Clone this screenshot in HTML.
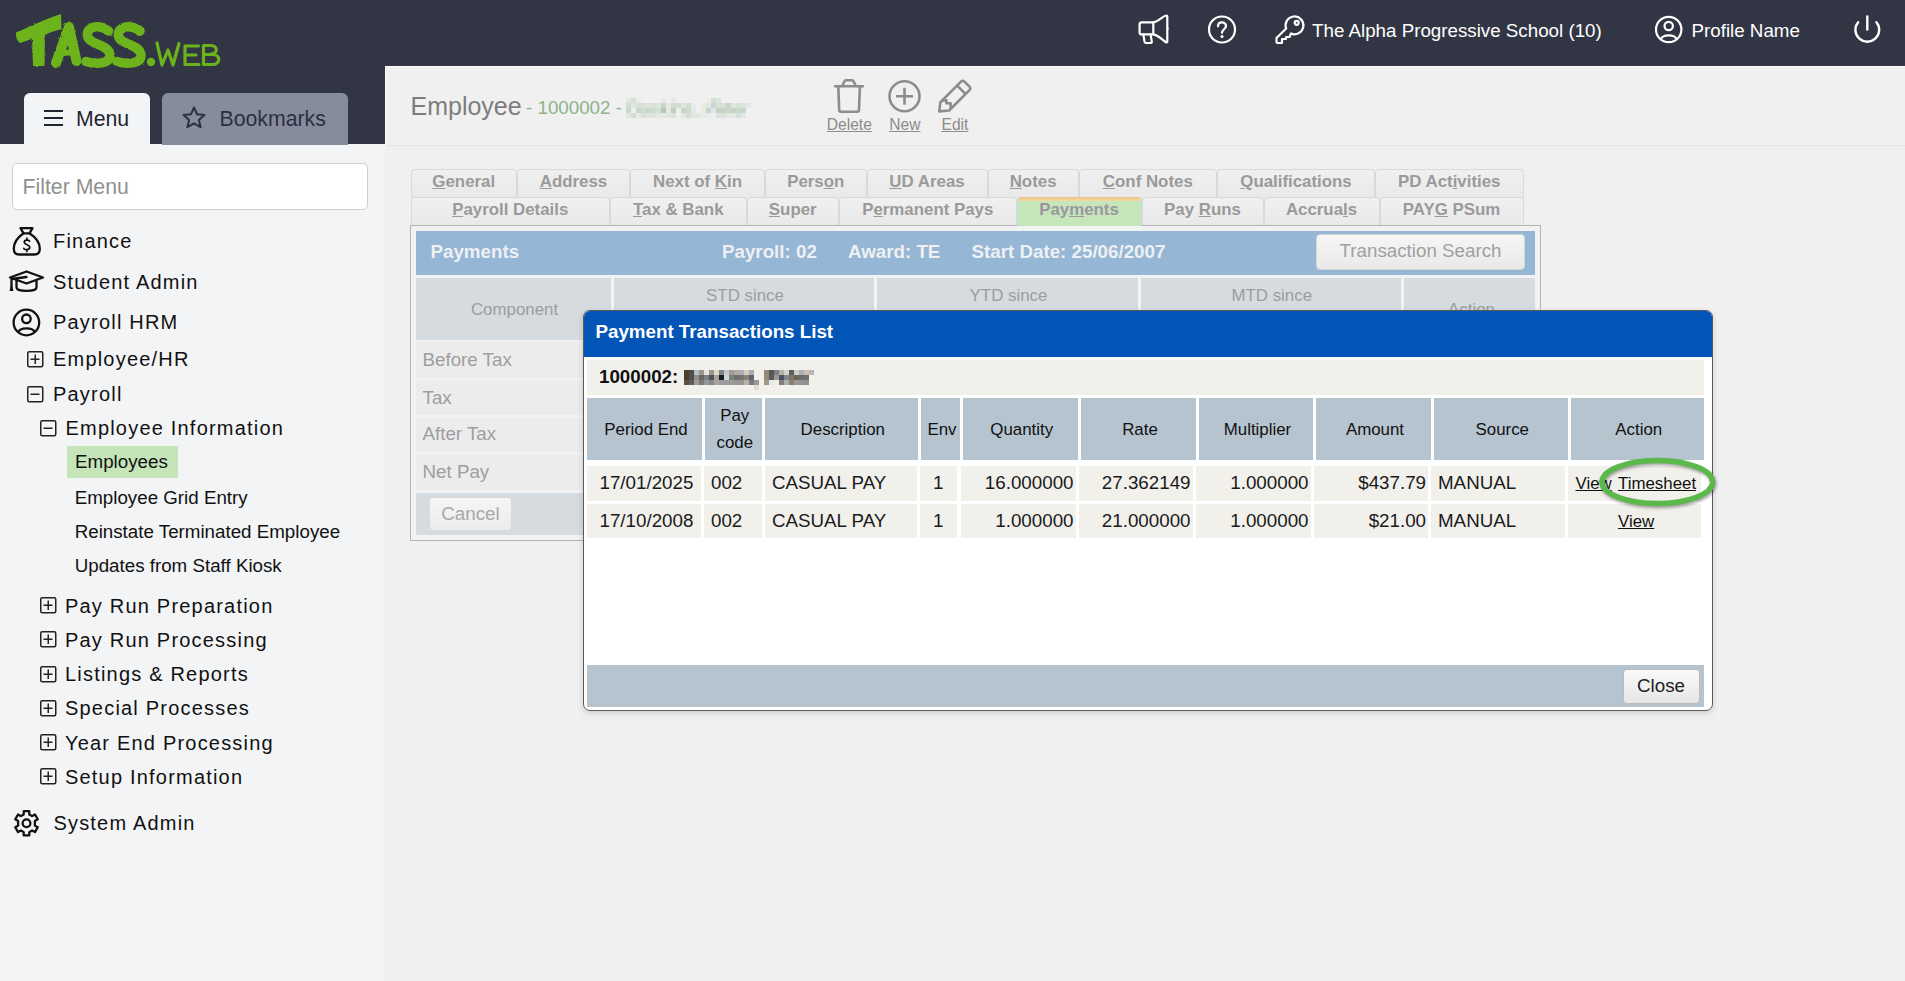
<!DOCTYPE html>
<html><head><meta charset="utf-8">
<style>
*{box-sizing:border-box;margin:0;padding:0}
html,body{width:1905px;height:981px;overflow:hidden;background:#f0f0f0;font-family:"Liberation Sans",sans-serif}
.abs{position:absolute}
svg.abs{overflow:visible}
.t{position:absolute;white-space:nowrap;line-height:1}
</style></head><body>
<div class="abs" style="left:0px;top:0px;width:1905px;height:66px;background:#323644;"></div>
<div class="abs" style="left:0px;top:0px;width:385px;height:981px;background:#f3f4f6;"></div>
<div class="abs" style="left:0px;top:0px;width:385px;height:144px;background:#323644;"></div>
<div class="abs" style="left:385px;top:66px;width:1520px;height:915px;background:#f0f0f0;"></div>
<div class="abs" style="left:385px;top:66px;width:1px;height:79px;background:#fbfbfb;"></div>
<div class="abs" style="left:385px;top:145px;width:1px;height:836px;background:#ededed;"></div>
<div class="abs" style="left:385px;top:66px;width:1520px;height:1px;background:#fcfcfc;"></div>
<div class="abs" style="left:386px;top:145px;width:1519px;height:1px;background:#e6e6e6;"></div>
<svg class="abs" style="left:0px;top:0px;" width="240" height="80" viewBox="0 0 240 80">
<defs><filter id="rough" x="-5%" y="-5%" width="110%" height="110%"><feTurbulence type="fractalNoise" baseFrequency="0.35" numOctaves="2" seed="3"/><feDisplacementMap in="SourceGraphic" scale="2.2"/></filter></defs>
<g filter="url(#rough)">
<path d="M16 32.5 C 30 27, 45 19, 61 14 L 61.5 29 C 48 33, 32 39, 20 43 C 17 41, 15.5 36, 16 32.5 Z" fill="#6cb31b"/>
<path d="M32 37 L 45 32 L 44.5 66 L 33 66 Z" fill="#6cb31b"/>
<g fill="none" stroke="#6cb31b" stroke-linecap="round" stroke-linejoin="round">
<path d="M56 63 L69 27 L76.5 61" stroke-width="10"/>
<path d="M63 53 L75 52" stroke-width="6"/>
<path d="M108.5 31 C 99 24, 86 26, 87.5 36 C 89 45, 110 44, 110 55.5 C 110 64, 96 64.5, 86 61.5" stroke-width="9.5"/>
<path d="M140 31 C 130 24, 117 26, 118.5 36 C 120 45, 141 44, 141 55.5 C 141 64, 127 64.5, 117 61.5" stroke-width="9.5"/>
</g></g>
<g fill="none" stroke="#6cb31b" stroke-linecap="round" stroke-linejoin="round">
<path d="M157 43 L162 65 L168 50 L173 65 L179 43.5" stroke-width="3.2"/>
<path d="M198.5 46 L185 46 L185 64.5 L199 64.5 M185 55 L196 55" stroke-width="3.2"/>
<path d="M203.5 45.5 L203.5 64.5 L212 64.5 C 221 64.5, 221 54.5, 212 54.5 L204 54.5 M203.5 45.5 L211 45.5 C 218 45.5, 218 54, 211 54" stroke-width="3.2"/>
</g>
<circle cx="151" cy="62" r="4.2" fill="#6cb31b"/>
</svg>
<svg class="abs" style="left:1137px;top:13px;" width="36" height="33" viewBox="0 0 36 33"><g fill="none" stroke="#fff" stroke-width="2.2" stroke-linejoin="round" stroke-linecap="round">
<path d="M4.6 9.4 H16.3 V21.4 H4.6 C 3.4 21.4, 2.6 20.6, 2.6 19.4 V11.4 C 2.6 10.2, 3.4 9.4, 4.6 9.4 Z"/>
<path d="M16.3 9.4 C 21.5 8.5, 25.5 3, 29.3 2.5 C 29.8 2.5, 30.3 3, 30.3 3.5 V28.5 C 30.3 29.3, 29.7 29.6, 29 29.2 C 25.5 27, 21 22, 16.3 21.4"/>
<path d="M6.3 21.4 L7.6 29 C 7.8 29.8, 8.3 30, 9 30 H13.8 C 14.6 30, 14.9 29.5, 14.8 28.8 L13.6 21.4"/></g>
<path d="M30.3 13.5 A 2.2 2.2 0 0 1 30.3 17.5 Z" fill="#fff"/></svg>
<svg class="abs" style="left:1206px;top:14px;" width="32" height="32" viewBox="0 0 32 32"><g fill="none" stroke="#fff" stroke-width="2.2" stroke-linecap="round"><circle cx="16" cy="15.5" r="13"/>
<path d="M12 12.3 C 12 7.2, 20 7.2, 20 12 C 20 15, 16 15.5, 16 18.8"/></g><circle cx="16" cy="22.6" r="1.5" fill="#fff"/></svg>
<svg class="abs" style="left:1273px;top:13px;" width="34" height="34" viewBox="0 0 34 34"><g fill="none" stroke="#fff" stroke-width="2.2" stroke-linejoin="round" stroke-linecap="round">
<path d="M13.2 15.5 A 8.9 8.9 0 1 1 18 20.5 L 16.5 24 L 13 24 L 13 26 L 9 26 L 9 30 L 4.5 30 C 3.8 30, 3.5 29.7, 3.5 29 L 3.5 25 Z"/>
<circle cx="23.7" cy="9.8" r="2"/></g></svg>
<div class="t" style="left:1312px;top:21.93px;font-size:18.75px;color:#fff;">The Alpha Progressive School (10)</div>
<svg class="abs" style="left:1653px;top:14px;" width="32" height="32" viewBox="0 0 32 32"><g fill="none" stroke="#fff" stroke-width="2.2"><circle cx="15.7" cy="15.5" r="12.7"/><circle cx="15.7" cy="12" r="4.2"/>
<path d="M7.7 25.3 C 9.7 20, 21.7 20, 23.7 25.3"/></g></svg>
<div class="t" style="left:1691.5px;top:21.93px;font-size:18.75px;color:#fff;">Profile Name</div>
<svg class="abs" style="left:1851px;top:14px;" width="34" height="32" viewBox="0 0 34 32"><g fill="none" stroke="#fff" stroke-width="2.4" stroke-linecap="round"><path d="M7.2 8.15 A 11.9 11.9 0 1 0 25.4 8.15"/><path d="M16.3 2.4 V15.6"/></g></svg>
<div class="abs" style="left:24px;top:93px;width:126px;height:52px;background:#f3f4f6;border-radius:6px 6px 0 0"></div>
<div class="abs" style="left:162px;top:93px;width:186px;height:52px;background:#878c9c;border-radius:6px 6px 0 0"></div>
<svg class="abs" style="left:43px;top:108px;" width="21" height="20" viewBox="0 0 21 20"><g stroke="#1f2430" stroke-width="2.2"><path d="M1 3 H20 M1 10 H20 M1 17 H20"/></g></svg>
<div class="t" style="left:76px;top:108.51px;font-size:21.25px;color:#1f2430;">Menu</div>
<svg class="abs" style="left:181px;top:105px;" width="26" height="26" viewBox="0 0 26 26"><path d="M13 2.5 L16.1 9.3 L23.5 10 L17.9 14.9 L19.6 22.2 L13 18.3 L6.4 22.2 L8.1 14.9 L2.5 10 L9.9 9.3 Z" fill="none" stroke="#2b3040" stroke-width="2" stroke-linejoin="round"/></svg>
<div class="t" style="left:219.5px;top:108.51px;font-size:21.25px;color:#2b3040;">Bookmarks</div>
<div class="abs" style="left:12px;top:163px;width:356px;height:47px;background:#fff;border:1px solid #cfcfcf;border-radius:5px"></div>
<div class="t" style="left:22.5px;top:177.01px;font-size:21.25px;color:#909090;">Filter Menu</div>
<div class="t" style="left:53px;top:231.07px;font-size:20px;color:#111;letter-spacing:1.2px;">Finance</div>
<div class="t" style="left:53px;top:271.57px;font-size:20px;color:#111;letter-spacing:1.2px;">Student Admin</div>
<div class="t" style="left:53px;top:312.07px;font-size:20px;color:#111;letter-spacing:1.2px;">Payroll HRM</div>
<svg class="abs" style="left:10px;top:225px;" width="34" height="34" viewBox="0 0 34 34"><g fill="none" stroke="#111" stroke-width="2.3" stroke-linejoin="round" stroke-linecap="round">
<path d="M10.5 3.2 H22.5 L19.5 8.3 H13.5 Z"/>
<path d="M13.5 8.3 C 7 13, 3.8 18.5, 3.8 23.5 C 3.8 28, 5.5 29.5, 9 29.5 H24.5 C 28 29.5, 29.8 28, 29.8 23.5 C 29.8 18.5, 26.5 13, 19.5 8.3"/>
</g><path d="M19.6 16.3 C 19.2 14.8, 14.2 14.3, 14.2 17.3 C 14.2 20, 19.8 19.5, 19.8 22.3 C 19.8 25.3, 14.3 25, 13.8 23.4 M16.9 13.2 V14.8 M16.9 25 V26.5" fill="none" stroke="#111" stroke-width="1.7" stroke-linecap="round"/></svg>
<svg class="abs" style="left:7px;top:268px;" width="40" height="26" viewBox="0 0 40 26"><g fill="none" stroke="#111" stroke-width="2.3" stroke-linejoin="round" stroke-linecap="round">
<path d="M3 9.5 L19.5 3.5 L36 9.5 L19.5 15.5 Z"/>
<path d="M9.5 12 V19.5 C 9.5 24, 29.5 24, 29.5 19.5 V12"/>
<path d="M19.5 9 L4.5 11 V20"/></g><path d="M2.5 23 L4.5 16 L6.5 23 Z" fill="#111"/></svg>
<svg class="abs" style="left:10px;top:306px;" width="33" height="33" viewBox="0 0 33 33"><g fill="none" stroke="#111" stroke-width="2.3"><circle cx="16.4" cy="16.5" r="12.8"/><circle cx="16.4" cy="12.8" r="4.3"/>
<path d="M8 26.5 C 10 21, 23 21, 25 26.5"/></g></svg>
<svg class="abs" style="left:27.3px;top:350.5px;" width="16.5" height="16.5" viewBox="0 0 16.5 16.5"><rect x="0.75" y="0.75" width="15" height="15" rx="1.5" fill="none" stroke="#222" stroke-width="1.5"/><path d="M3.5 8.25 H12.5" stroke="#222" stroke-width="1.5"/><path d="M8.25 3.5 V13" stroke="#222" stroke-width="1.5"/></svg>
<div class="t" style="left:53px;top:349.07px;font-size:20px;color:#111;letter-spacing:1.2px;">Employee/HR</div>
<svg class="abs" style="left:27.3px;top:385.8px;" width="16.5" height="16.5" viewBox="0 0 16.5 16.5"><rect x="0.75" y="0.75" width="15" height="15" rx="1.5" fill="none" stroke="#222" stroke-width="1.5"/><path d="M3.5 8.25 H12.5" stroke="#222" stroke-width="1.5"/></svg>
<div class="t" style="left:53px;top:384.07px;font-size:20px;color:#111;letter-spacing:1.2px;">Payroll</div>
<svg class="abs" style="left:39.8px;top:419.6px;" width="16.5" height="16.5" viewBox="0 0 16.5 16.5"><rect x="0.75" y="0.75" width="15" height="15" rx="1.5" fill="none" stroke="#222" stroke-width="1.5"/><path d="M3.5 8.25 H12.5" stroke="#222" stroke-width="1.5"/></svg>
<div class="t" style="left:65.5px;top:418.07px;font-size:20px;color:#111;letter-spacing:1.2px;">Employee Information</div>
<div class="abs" style="left:67px;top:446px;width:111px;height:32px;background:#c5e5b9;"></div>
<div class="t" style="left:75px;top:453.13px;font-size:18.75px;color:#111;">Employees</div>
<div class="t" style="left:74.7px;top:489.13px;font-size:18.75px;color:#111;">Employee Grid Entry</div>
<div class="t" style="left:74.7px;top:523.13px;font-size:18.75px;color:#111;">Reinstate Terminated Employee</div>
<div class="t" style="left:74.7px;top:557.13px;font-size:18.75px;color:#111;">Updates from Staff Kiosk</div>
<svg class="abs" style="left:39.8px;top:597.0px;" width="16.5" height="16.5" viewBox="0 0 16.5 16.5"><rect x="0.75" y="0.75" width="15" height="15" rx="1.5" fill="none" stroke="#222" stroke-width="1.5"/><path d="M3.5 8.25 H12.5" stroke="#222" stroke-width="1.5"/><path d="M8.25 3.5 V13" stroke="#222" stroke-width="1.5"/></svg>
<div class="t" style="left:65px;top:595.57px;font-size:20px;color:#111;letter-spacing:1.2px;">Pay Run Preparation</div>
<svg class="abs" style="left:39.8px;top:631.25px;" width="16.5" height="16.5" viewBox="0 0 16.5 16.5"><rect x="0.75" y="0.75" width="15" height="15" rx="1.5" fill="none" stroke="#222" stroke-width="1.5"/><path d="M3.5 8.25 H12.5" stroke="#222" stroke-width="1.5"/><path d="M8.25 3.5 V13" stroke="#222" stroke-width="1.5"/></svg>
<div class="t" style="left:65px;top:629.82px;font-size:20px;color:#111;letter-spacing:1.2px;">Pay Run Processing</div>
<svg class="abs" style="left:39.8px;top:665.5px;" width="16.5" height="16.5" viewBox="0 0 16.5 16.5"><rect x="0.75" y="0.75" width="15" height="15" rx="1.5" fill="none" stroke="#222" stroke-width="1.5"/><path d="M3.5 8.25 H12.5" stroke="#222" stroke-width="1.5"/><path d="M8.25 3.5 V13" stroke="#222" stroke-width="1.5"/></svg>
<div class="t" style="left:65px;top:664.07px;font-size:20px;color:#111;letter-spacing:1.2px;">Listings &amp; Reports</div>
<svg class="abs" style="left:39.8px;top:699.75px;" width="16.5" height="16.5" viewBox="0 0 16.5 16.5"><rect x="0.75" y="0.75" width="15" height="15" rx="1.5" fill="none" stroke="#222" stroke-width="1.5"/><path d="M3.5 8.25 H12.5" stroke="#222" stroke-width="1.5"/><path d="M8.25 3.5 V13" stroke="#222" stroke-width="1.5"/></svg>
<div class="t" style="left:65px;top:698.32px;font-size:20px;color:#111;letter-spacing:1.2px;">Special Processes</div>
<svg class="abs" style="left:39.8px;top:734.0px;" width="16.5" height="16.5" viewBox="0 0 16.5 16.5"><rect x="0.75" y="0.75" width="15" height="15" rx="1.5" fill="none" stroke="#222" stroke-width="1.5"/><path d="M3.5 8.25 H12.5" stroke="#222" stroke-width="1.5"/><path d="M8.25 3.5 V13" stroke="#222" stroke-width="1.5"/></svg>
<div class="t" style="left:65px;top:732.57px;font-size:20px;color:#111;letter-spacing:1.2px;">Year End Processing</div>
<svg class="abs" style="left:39.8px;top:768.25px;" width="16.5" height="16.5" viewBox="0 0 16.5 16.5"><rect x="0.75" y="0.75" width="15" height="15" rx="1.5" fill="none" stroke="#222" stroke-width="1.5"/><path d="M3.5 8.25 H12.5" stroke="#222" stroke-width="1.5"/><path d="M8.25 3.5 V13" stroke="#222" stroke-width="1.5"/></svg>
<div class="t" style="left:65px;top:766.82px;font-size:20px;color:#111;letter-spacing:1.2px;">Setup Information</div>
<svg class="abs" style="left:11px;top:808px;" width="31" height="31" viewBox="0 0 31 31"><g fill="none" stroke="#111" stroke-width="2.45" stroke-linejoin="round" transform="translate(15.5 15.3) scale(0.93) translate(-15.5 -15.5)">
<path d="M12.5 2.5 H18.5 V6 L21.5 7.8 L24.6 6 L27.6 11.2 L24.5 13 V18 L27.6 19.8 L24.6 25 L21.5 23.2 L18.5 25 V28.5 H12.5 V25 L9.5 23.2 L6.4 25 L3.4 19.8 L6.5 18 V13 L3.4 11.2 L6.4 6 L9.5 7.8 L12.5 6 Z"/>
<circle cx="15.5" cy="15.5" r="4.2"/></g></svg>
<div class="t" style="left:53.4px;top:813.07px;font-size:20px;color:#111;letter-spacing:1.2px;">System Admin</div>
<div class="t" style="left:410.5px;top:94.14px;font-size:25px;color:#7d7d7d;">Employee</div>
<div class="t" style="left:526px;top:99.13px;font-size:18.75px;color:#8db38a;">- 1000002 -</div>
<svg class="abs" style="left:626px;top:98px;filter:blur(0.5px)" width="125" height="20" viewBox="0 0 125 20"><rect x="0" y="0" width="5" height="5" fill="#e4e7e2"/><rect x="5" y="0" width="5" height="5" fill="#d5dfd6"/><rect x="10" y="0" width="5" height="5" fill="#e6ecec"/><rect x="15" y="0" width="5" height="5" fill="#f0f0f0"/><rect x="20" y="0" width="5" height="5" fill="#f0f0f0"/><rect x="25" y="0" width="5" height="5" fill="#f0f0f0"/><rect x="30" y="0" width="5" height="5" fill="#f0f0f0"/><rect x="35" y="0" width="5" height="5" fill="#e6e9e7"/><rect x="40" y="0" width="5" height="5" fill="#efeeec"/><rect x="45" y="0" width="5" height="5" fill="#e4eae9"/><rect x="50" y="0" width="5" height="5" fill="#f0f0f0"/><rect x="55" y="0" width="5" height="5" fill="#f0f0f0"/><rect x="60" y="0" width="5" height="5" fill="#f0f0f0"/><rect x="65" y="0" width="5" height="5" fill="#f0f0f0"/><rect x="70" y="0" width="5" height="5" fill="#f0f0f0"/><rect x="75" y="0" width="5" height="5" fill="#f0f0f0"/><rect x="80" y="0" width="5" height="5" fill="#eeede6"/><rect x="85" y="0" width="5" height="5" fill="#d2ddd3"/><rect x="90" y="0" width="5" height="5" fill="#dde3e0"/><rect x="95" y="0" width="5" height="5" fill="#f0f0f0"/><rect x="100" y="0" width="5" height="5" fill="#f0f0f0"/><rect x="105" y="0" width="5" height="5" fill="#f0f0f0"/><rect x="110" y="0" width="5" height="5" fill="#f0f0f0"/><rect x="115" y="0" width="5" height="5" fill="#f0f0f0"/><rect x="120" y="0" width="5" height="5" fill="#f0f0f0"/><rect x="0" y="5" width="5" height="5" fill="#d3ddd2"/><rect x="5" y="5" width="5" height="5" fill="#dde6dc"/><rect x="10" y="5" width="5" height="5" fill="#d5dfd6"/><rect x="15" y="5" width="5" height="5" fill="#dae0d8"/><rect x="20" y="5" width="5" height="5" fill="#dae3de"/><rect x="25" y="5" width="5" height="5" fill="#d9e0d6"/><rect x="30" y="5" width="5" height="5" fill="#dfe5e0"/><rect x="35" y="5" width="5" height="5" fill="#cbd6ca"/><rect x="40" y="5" width="5" height="5" fill="#e7e8e5"/><rect x="45" y="5" width="5" height="5" fill="#d3ded3"/><rect x="50" y="5" width="5" height="5" fill="#d3ddd2"/><rect x="55" y="5" width="5" height="5" fill="#e0e6dd"/><rect x="60" y="5" width="5" height="5" fill="#d2dcd2"/><rect x="65" y="5" width="5" height="5" fill="#e6ebeb"/><rect x="70" y="5" width="5" height="5" fill="#f0f0f0"/><rect x="75" y="5" width="5" height="5" fill="#ebe9dc"/><rect x="80" y="5" width="5" height="5" fill="#dde7ea"/><rect x="85" y="5" width="5" height="5" fill="#cbd7cc"/><rect x="90" y="5" width="5" height="5" fill="#dae2d8"/><rect x="95" y="5" width="5" height="5" fill="#d9e1d9"/><rect x="100" y="5" width="5" height="5" fill="#c8d7c5"/><rect x="105" y="5" width="5" height="5" fill="#e0e6dc"/><rect x="110" y="5" width="5" height="5" fill="#d8e1dc"/><rect x="115" y="5" width="5" height="5" fill="#dde4da"/><rect x="120" y="5" width="5" height="5" fill="#e3e7e5"/><rect x="0" y="10" width="5" height="5" fill="#cbd9ca"/><rect x="5" y="10" width="5" height="5" fill="#ededeb"/><rect x="10" y="10" width="5" height="5" fill="#c9d8c8"/><rect x="15" y="10" width="5" height="5" fill="#cfdcd0"/><rect x="20" y="10" width="5" height="5" fill="#c7d7cb"/><rect x="25" y="10" width="5" height="5" fill="#d0dccd"/><rect x="30" y="10" width="5" height="5" fill="#d5e1d8"/><rect x="35" y="10" width="5" height="5" fill="#b6c8b2"/><rect x="40" y="10" width="5" height="5" fill="#e7e9e5"/><rect x="45" y="10" width="5" height="5" fill="#bdd1bb"/><rect x="50" y="10" width="5" height="5" fill="#edf0ee"/><rect x="55" y="10" width="5" height="5" fill="#cbd3c9"/><rect x="60" y="10" width="5" height="5" fill="#ccdacc"/><rect x="65" y="10" width="5" height="5" fill="#e1e8e7"/><rect x="70" y="10" width="5" height="5" fill="#f0f0f0"/><rect x="75" y="10" width="5" height="5" fill="#ebe8dc"/><rect x="80" y="10" width="5" height="5" fill="#c3d6cf"/><rect x="85" y="10" width="5" height="5" fill="#e1e8e5"/><rect x="90" y="10" width="5" height="5" fill="#c5d3c2"/><rect x="95" y="10" width="5" height="5" fill="#c5d5c5"/><rect x="100" y="10" width="5" height="5" fill="#cdd9cf"/><rect x="105" y="10" width="5" height="5" fill="#c5d4c1"/><rect x="110" y="10" width="5" height="5" fill="#cbdac4"/><rect x="115" y="10" width="5" height="5" fill="#c5d6cf"/><rect x="120" y="10" width="5" height="5" fill="#f0f0f0"/><rect x="0" y="15" width="5" height="5" fill="#e3e6e0"/><rect x="5" y="15" width="5" height="5" fill="#d2ddd2"/><rect x="10" y="15" width="5" height="5" fill="#e3eae8"/><rect x="15" y="15" width="5" height="5" fill="#dae2d8"/><rect x="20" y="15" width="5" height="5" fill="#dde5e0"/><rect x="25" y="15" width="5" height="5" fill="#dce3da"/><rect x="30" y="15" width="5" height="5" fill="#e2e8e3"/><rect x="35" y="15" width="5" height="5" fill="#e5e9e5"/><rect x="40" y="15" width="5" height="5" fill="#e1e6df"/><rect x="45" y="15" width="5" height="5" fill="#dae2d9"/><rect x="50" y="15" width="5" height="5" fill="#eeefee"/><rect x="55" y="15" width="5" height="5" fill="#e3e6df"/><rect x="60" y="15" width="5" height="5" fill="#d5ded4"/><rect x="65" y="15" width="5" height="5" fill="#e5e8df"/><rect x="70" y="15" width="5" height="5" fill="#dfe6ea"/><rect x="75" y="15" width="5" height="5" fill="#ecebe3"/><rect x="80" y="15" width="5" height="5" fill="#e6edec"/><rect x="85" y="15" width="5" height="5" fill="#f0f0f0"/><rect x="90" y="15" width="5" height="5" fill="#dee4dc"/><rect x="95" y="15" width="5" height="5" fill="#d8e3dc"/><rect x="100" y="15" width="5" height="5" fill="#e2e7e0"/><rect x="105" y="15" width="5" height="5" fill="#e3e7e1"/><rect x="110" y="15" width="5" height="5" fill="#d5e0dc"/><rect x="115" y="15" width="5" height="5" fill="#e3e9e6"/><rect x="120" y="15" width="5" height="5" fill="#f0f0f0"/></svg>
<svg class="abs" style="left:832px;top:77px;" width="34" height="38" viewBox="0 0 34 38"><g fill="none" stroke="#8c8c8c" stroke-width="2.6" stroke-linejoin="round" stroke-linecap="round">
<path d="M3.2 9.3 H30.8"/><path d="M10.2 9 L12.2 4.8 C 12.7 3.6, 13.2 3.3, 14.2 3.3 H19.8 C 20.8 3.3, 21.3 3.6, 21.8 4.8 L23.8 9"/>
<path d="M6.3 9.5 L7.2 32.8 C 7.2 34.1, 7.9 34.7, 9.1 34.7 H25.1 C 26.3 34.7, 27 34.1, 27 32.8 L27.9 9.5"/></g></svg>
<div class="t" style="left:826.8px;top:117.19px;font-size:15.6px;color:#8c8c8c;text-decoration:underline;">Delete</div>
<svg class="abs" style="left:887px;top:79px;" width="35" height="35" viewBox="0 0 35 35"><g fill="none" stroke="#8c8c8c" stroke-width="2.6"><circle cx="17.5" cy="17.2" r="15"/><path d="M9 17.2 H26 M17.5 8.7 V25.7"/></g></svg>
<div class="t" style="left:889.3px;top:117.19px;font-size:15.6px;color:#8c8c8c;text-decoration:underline;">New</div>
<svg class="abs" style="left:935px;top:77px;" width="38" height="38" viewBox="0 0 38 38"><g fill="none" stroke="#8c8c8c" stroke-width="2.6" stroke-linejoin="round">
<path d="M4.3 34.4 L5.3 25.3 L26 4.6 C 27 3.6, 28.4 3.6, 29.4 4.6 L34.5 9.7 C 35.5 10.7, 35.5 12.1, 34.5 13.1 L14.1 33.5 Z"/><path d="M22.2 8.6 L30.2 16.6"/>
<path d="M6.8 23.6 L11.4 23.2 L11.4 26.3 L15.6 26.3 L15.6 31.8"/></g></svg>
<div class="t" style="left:941.5px;top:117.19px;font-size:15.6px;color:#8c8c8c;text-decoration:underline;">Edit</div>
<div class="abs" style="left:410.5px;top:169px;width:106.5px;height:29px;background:linear-gradient(#f0f0f0,#e9e9e9);border:1px solid #d3dbe0;border-bottom:none;border-radius:4px 4px 0 0"></div>
<div class="t" style="left:410.5px;top:173.72px;font-size:16.875px;color:#9a9a9a;font-weight:bold;width:106.5px;text-align:center;"><u>G</u>eneral</div>
<div class="abs" style="left:517px;top:169px;width:113px;height:29px;background:linear-gradient(#f0f0f0,#e9e9e9);border:1px solid #d3dbe0;border-bottom:none;border-radius:4px 4px 0 0"></div>
<div class="t" style="left:517px;top:173.72px;font-size:16.875px;color:#9a9a9a;font-weight:bold;width:113px;text-align:center;"><u>A</u>ddress</div>
<div class="abs" style="left:630px;top:169px;width:135px;height:29px;background:linear-gradient(#f0f0f0,#e9e9e9);border:1px solid #d3dbe0;border-bottom:none;border-radius:4px 4px 0 0"></div>
<div class="t" style="left:630px;top:173.72px;font-size:16.875px;color:#9a9a9a;font-weight:bold;width:135px;text-align:center;">Next of <u>K</u>in</div>
<div class="abs" style="left:765px;top:169px;width:101.5px;height:29px;background:linear-gradient(#f0f0f0,#e9e9e9);border:1px solid #d3dbe0;border-bottom:none;border-radius:4px 4px 0 0"></div>
<div class="t" style="left:765px;top:173.72px;font-size:16.875px;color:#9a9a9a;font-weight:bold;width:101.5px;text-align:center;">Pers<u>o</u>n</div>
<div class="abs" style="left:866.5px;top:169px;width:121.0px;height:29px;background:linear-gradient(#f0f0f0,#e9e9e9);border:1px solid #d3dbe0;border-bottom:none;border-radius:4px 4px 0 0"></div>
<div class="t" style="left:866.5px;top:173.72px;font-size:16.875px;color:#9a9a9a;font-weight:bold;width:121.0px;text-align:center;"><u>U</u>D Areas</div>
<div class="abs" style="left:987.5px;top:169px;width:91.20000000000005px;height:29px;background:linear-gradient(#f0f0f0,#e9e9e9);border:1px solid #d3dbe0;border-bottom:none;border-radius:4px 4px 0 0"></div>
<div class="t" style="left:987.5px;top:173.72px;font-size:16.875px;color:#9a9a9a;font-weight:bold;width:91.20000000000005px;text-align:center;"><u>N</u>otes</div>
<div class="abs" style="left:1078.7px;top:169px;width:138.29999999999995px;height:29px;background:linear-gradient(#f0f0f0,#e9e9e9);border:1px solid #d3dbe0;border-bottom:none;border-radius:4px 4px 0 0"></div>
<div class="t" style="left:1078.7px;top:173.72px;font-size:16.875px;color:#9a9a9a;font-weight:bold;width:138.29999999999995px;text-align:center;"><u>C</u>onf Notes</div>
<div class="abs" style="left:1217px;top:169px;width:158px;height:29px;background:linear-gradient(#f0f0f0,#e9e9e9);border:1px solid #d3dbe0;border-bottom:none;border-radius:4px 4px 0 0"></div>
<div class="t" style="left:1217px;top:173.72px;font-size:16.875px;color:#9a9a9a;font-weight:bold;width:158px;text-align:center;"><u>Q</u>ualifications</div>
<div class="abs" style="left:1375px;top:169px;width:148.5px;height:29px;background:linear-gradient(#f0f0f0,#e9e9e9);border:1px solid #d3dbe0;border-bottom:none;border-radius:4px 4px 0 0"></div>
<div class="t" style="left:1375px;top:173.72px;font-size:16.875px;color:#9a9a9a;font-weight:bold;width:148.5px;text-align:center;">PD Act<u>i</u>vities</div>
<div class="abs" style="left:410.5px;top:197px;width:199.5px;height:29px;background:linear-gradient(#f0f0f0,#e9e9e9);border:1px solid #d3dbe0;border-bottom:none;border-radius:4px 4px 0 0"></div>
<div class="t" style="left:410.5px;top:201.72px;font-size:16.875px;color:#9a9a9a;font-weight:bold;width:199.5px;text-align:center;"><u>P</u>ayroll Details</div>
<div class="abs" style="left:610px;top:197px;width:136.5px;height:29px;background:linear-gradient(#f0f0f0,#e9e9e9);border:1px solid #d3dbe0;border-bottom:none;border-radius:4px 4px 0 0"></div>
<div class="t" style="left:610px;top:201.72px;font-size:16.875px;color:#9a9a9a;font-weight:bold;width:136.5px;text-align:center;"><u>T</u>ax &amp; Bank</div>
<div class="abs" style="left:746.5px;top:197px;width:92.5px;height:29px;background:linear-gradient(#f0f0f0,#e9e9e9);border:1px solid #d3dbe0;border-bottom:none;border-radius:4px 4px 0 0"></div>
<div class="t" style="left:746.5px;top:201.72px;font-size:16.875px;color:#9a9a9a;font-weight:bold;width:92.5px;text-align:center;"><u>S</u>uper</div>
<div class="abs" style="left:839px;top:197px;width:177.5px;height:29px;background:linear-gradient(#f0f0f0,#e9e9e9);border:1px solid #d3dbe0;border-bottom:none;border-radius:4px 4px 0 0"></div>
<div class="t" style="left:839px;top:201.72px;font-size:16.875px;color:#9a9a9a;font-weight:bold;width:177.5px;text-align:center;">P<u>e</u>rmanent Pays</div>
<div class="abs" style="z-index:3;left:1016.5px;top:197px;width:125.0px;height:29.3px;background:#c5e6bb;border:1px solid #cfdbe0;border-bottom:none;border-top:none;border-radius:4px 4px 0 0;overflow:hidden"><div style="height:4px;background:linear-gradient(#f1bf88,#f2dca0)"></div></div>
<div class="t" style="left:1016.5px;top:201.72px;font-size:16.875px;color:#9a97a0;font-weight:bold;width:125.0px;text-align:center;z-index:4">Pay<u>m</u>ents</div>
<div class="abs" style="left:1141.5px;top:197px;width:122.0px;height:29px;background:linear-gradient(#f0f0f0,#e9e9e9);border:1px solid #d3dbe0;border-bottom:none;border-radius:4px 4px 0 0"></div>
<div class="t" style="left:1141.5px;top:201.72px;font-size:16.875px;color:#9a9a9a;font-weight:bold;width:122.0px;text-align:center;">Pay <u>R</u>uns</div>
<div class="abs" style="left:1263.5px;top:197px;width:116.0px;height:29px;background:linear-gradient(#f0f0f0,#e9e9e9);border:1px solid #d3dbe0;border-bottom:none;border-radius:4px 4px 0 0"></div>
<div class="t" style="left:1263.5px;top:201.72px;font-size:16.875px;color:#9a9a9a;font-weight:bold;width:116.0px;text-align:center;">Accrua<u>l</u>s</div>
<div class="abs" style="left:1379.5px;top:197px;width:144.0px;height:29px;background:linear-gradient(#f0f0f0,#e9e9e9);border:1px solid #d3dbe0;border-bottom:none;border-radius:4px 4px 0 0"></div>
<div class="t" style="left:1379.5px;top:201.72px;font-size:16.875px;color:#9a9a9a;font-weight:bold;width:144.0px;text-align:center;">PAY<u>G</u> PSum</div>
<div class="abs" style="left:410px;top:225px;width:1131px;height:316px;background:#f2f2f2;border:1px solid #b4b4b4"></div>
<div class="abs" style="left:416px;top:231px;width:1119px;height:44px;background:#96b6d5;"></div>
<div class="t" style="left:430.5px;top:243.13px;font-size:18.75px;color:#eef0f3;font-weight:bold;">Payments</div>
<div class="t" style="left:722px;top:243.13px;font-size:18.75px;color:#eef0f3;font-weight:bold;">Payroll: 02</div>
<div class="t" style="left:848px;top:243.13px;font-size:18.75px;color:#eef0f3;font-weight:bold;">Award: TE</div>
<div class="t" style="left:971.5px;top:243.13px;font-size:18.75px;color:#eef0f3;font-weight:bold;">Start Date: 25/06/2007</div>
<div class="abs" style="left:1316px;top:234px;width:209px;height:36px;background:linear-gradient(#f6f6f6,#e9e9e9);border:1px solid #d6d6d6;border-radius:4px"></div>
<div class="t" style="left:1316px;top:242.43px;font-size:18.75px;color:#a0a0a0;width:209px;text-align:center;">Transaction Search</div>
<div class="abs" style="left:416px;top:278px;width:195px;height:62px;background:#d6dbdf;"></div>
<div class="t" style="left:417px;top:302.12px;font-size:16.875px;color:#9d9d9d;width:195px;text-align:center;">Component</div>
<div class="abs" style="left:614px;top:278px;width:260px;height:62px;background:#d6dbdf;"></div>
<div class="t" style="left:615px;top:288.22px;font-size:16.875px;color:#9d9d9d;width:260px;text-align:center;">STD since</div>
<div class="abs" style="left:877px;top:278px;width:261px;height:62px;background:#d6dbdf;"></div>
<div class="t" style="left:878px;top:288.22px;font-size:16.875px;color:#9d9d9d;width:261px;text-align:center;">YTD since</div>
<div class="abs" style="left:1141px;top:278px;width:259.5px;height:62px;background:#d6dbdf;"></div>
<div class="t" style="left:1142px;top:288.22px;font-size:16.875px;color:#9d9d9d;width:259.5px;text-align:center;">MTD since</div>
<div class="abs" style="left:1404px;top:278px;width:131px;height:62px;background:#d6dbdf;"></div>
<div class="t" style="left:1406px;top:302.22px;font-size:16.875px;color:#9d9d9d;width:131px;text-align:center;">Action</div>
<div class="abs" style="left:416px;top:341px;width:1119px;height:37px;background:#ececec;"></div>
<div class="t" style="left:422.5px;top:350.63px;font-size:18.75px;color:#9e9e9e;">Before Tax</div>
<div class="abs" style="left:416px;top:381px;width:1119px;height:34px;background:#ececec;"></div>
<div class="t" style="left:422.5px;top:388.83px;font-size:18.75px;color:#9e9e9e;">Tax</div>
<div class="abs" style="left:416px;top:418px;width:1119px;height:34px;background:#ececec;"></div>
<div class="t" style="left:422.5px;top:425.23px;font-size:18.75px;color:#9e9e9e;">After Tax</div>
<div class="abs" style="left:416px;top:455px;width:1119px;height:35px;background:#ececec;"></div>
<div class="t" style="left:422.5px;top:462.63px;font-size:18.75px;color:#9e9e9e;">Net Pay</div>
<div class="abs" style="left:416px;top:493px;width:1119px;height:42px;background:#d6dbdf;"></div>
<div class="abs" style="left:429px;top:497px;width:83px;height:34px;background:linear-gradient(#f6f6f6,#ebebeb);border:1px solid #d9d9d9;border-radius:4px"></div>
<div class="t" style="left:429px;top:505.13px;font-size:18.75px;color:#a8a8a8;width:83px;text-align:center;">Cancel</div>
<div class="abs" style="left:583px;top:310px;width:1130px;height:401px;background:#fff;border:1px solid #5a5a5a;border-radius:7px;box-shadow:0 2px 6px rgba(0,0,0,0.15);overflow:hidden"><div class="abs" style="left:0;top:0;width:1128px;height:46px;background:#0455b8"></div></div>
<div class="t" style="left:595.5px;top:322.93px;font-size:18.75px;color:#fff;font-weight:bold;">Payment Transactions List</div>
<div class="abs" style="left:587px;top:360px;width:1117px;height:35px;background:#f1f0eb;"></div>
<div class="t" style="left:599px;top:368.13px;font-size:18.75px;color:#111;font-weight:bold;">1000002:</div>
<svg class="abs" style="left:684px;top:370px;filter:blur(0.5px)" width="80" height="20" viewBox="0 0 80 20"><rect x="0" y="0" width="5" height="5" fill="#4a3f30"/><rect x="5" y="0" width="5" height="5" fill="#4d4d48"/><rect x="10" y="0" width="5" height="5" fill="#b9bec4"/><rect x="15" y="0" width="5" height="5" fill="#9a958e"/><rect x="20" y="0" width="5" height="5" fill="#e3e4de"/><rect x="25" y="0" width="5" height="5" fill="#9b968d"/><rect x="30" y="0" width="5" height="5" fill="#e1dac5"/><rect x="35" y="0" width="5" height="5" fill="#7d8391"/><rect x="40" y="0" width="5" height="5" fill="#c9c5c7"/><rect x="45" y="0" width="5" height="5" fill="#9b9e99"/><rect x="50" y="0" width="5" height="5" fill="#b3aa9a"/><rect x="55" y="0" width="5" height="5" fill="#a9aeb4"/><rect x="60" y="0" width="5" height="5" fill="#d5cbc0"/><rect x="65" y="0" width="5" height="5" fill="#a7abb5"/><rect x="0" y="5" width="5" height="5" fill="#4a3e2e"/><rect x="5" y="5" width="5" height="5" fill="#554d4a"/><rect x="10" y="5" width="5" height="5" fill="#8e918b"/><rect x="15" y="5" width="5" height="5" fill="#6b6662"/><rect x="20" y="5" width="5" height="5" fill="#7b8085"/><rect x="25" y="5" width="5" height="5" fill="#555452"/><rect x="30" y="5" width="5" height="5" fill="#a8a39c"/><rect x="35" y="5" width="5" height="5" fill="#1b1c1e"/><rect x="40" y="5" width="5" height="5" fill="#c8d8d8"/><rect x="45" y="5" width="5" height="5" fill="#7c807b"/><rect x="50" y="5" width="5" height="5" fill="#6e6e6a"/><rect x="55" y="5" width="5" height="5" fill="#737571"/><rect x="60" y="5" width="5" height="5" fill="#8a8370"/><rect x="65" y="5" width="5" height="5" fill="#5f6670"/><rect x="0" y="10" width="5" height="5" fill="#5b503f"/><rect x="5" y="10" width="5" height="5" fill="#5e5e5e"/><rect x="10" y="10" width="5" height="5" fill="#9c9a93"/><rect x="15" y="10" width="5" height="5" fill="#7b7a75"/><rect x="20" y="10" width="5" height="5" fill="#919a9a"/><rect x="25" y="10" width="5" height="5" fill="#8c8780"/><rect x="30" y="10" width="5" height="5" fill="#a7a29d"/><rect x="35" y="10" width="5" height="5" fill="#9a9ba3"/><rect x="40" y="10" width="5" height="5" fill="#979b95"/><rect x="45" y="10" width="5" height="5" fill="#9b9c98"/><rect x="50" y="10" width="5" height="5" fill="#979893"/><rect x="55" y="10" width="5" height="5" fill="#969691"/><rect x="60" y="10" width="5" height="5" fill="#bdb0a6"/><rect x="65" y="10" width="5" height="5" fill="#7b7a80"/><rect x="70" y="10" width="5" height="5" fill="#959b92"/><rect x="70" y="15" width="5" height="5" fill="#e1dcd6"/></svg>
<svg class="abs" style="left:764px;top:370px;filter:blur(0.5px)" width="50" height="20" viewBox="0 0 50 20"><rect x="0" y="0" width="5" height="5" fill="#958a78"/><rect x="5" y="0" width="5" height="5" fill="#555856"/><rect x="10" y="0" width="5" height="5" fill="#7c7f8c"/><rect x="15" y="0" width="5" height="5" fill="#b8ada2"/><rect x="20" y="0" width="5" height="5" fill="#d2d3cd"/><rect x="25" y="0" width="5" height="5" fill="#5c5e58"/><rect x="30" y="0" width="5" height="5" fill="#d0cdc4"/><rect x="35" y="0" width="5" height="5" fill="#a9b0b5"/><rect x="40" y="0" width="5" height="5" fill="#c9bfb7"/><rect x="45" y="0" width="5" height="5" fill="#b9b9b7"/><rect x="0" y="5" width="5" height="5" fill="#968a78"/><rect x="5" y="5" width="5" height="5" fill="#585b59"/><rect x="10" y="5" width="5" height="5" fill="#9e9791"/><rect x="15" y="5" width="5" height="5" fill="#4c5263"/><rect x="20" y="5" width="5" height="5" fill="#7f8589"/><rect x="25" y="5" width="5" height="5" fill="#7a7472"/><rect x="30" y="5" width="5" height="5" fill="#6c6855"/><rect x="35" y="5" width="5" height="5" fill="#6d6b6e"/><rect x="40" y="5" width="5" height="5" fill="#716b6c"/><rect x="0" y="10" width="5" height="5" fill="#a39887"/><rect x="5" y="10" width="5" height="5" fill="#e2eaee"/><rect x="10" y="10" width="5" height="5" fill="#f5efe3"/><rect x="15" y="10" width="5" height="5" fill="#857d7a"/><rect x="20" y="10" width="5" height="5" fill="#aab0af"/><rect x="25" y="10" width="5" height="5" fill="#8e8172"/><rect x="30" y="10" width="5" height="5" fill="#959a93"/><rect x="35" y="10" width="5" height="5" fill="#93939a"/><rect x="40" y="10" width="5" height="5" fill="#909290"/></svg>
<div class="abs" style="left:587px;top:398px;width:115px;height:62px;background:#b6c4d0;"></div>
<div class="t" style="left:588.5px;top:421.52px;font-size:16.875px;color:#111;width:115px;text-align:center;">Period End</div>
<div class="abs" style="left:705px;top:398px;width:56.5px;height:62px;background:#b6c4d0;"></div>
<div class="t" style="left:706.5px;top:407.92px;font-size:16.875px;color:#111;width:56.5px;text-align:center;">Pay</div>
<div class="t" style="left:706.5px;top:435.22px;font-size:16.875px;color:#111;width:56.5px;text-align:center;">code</div>
<div class="abs" style="left:765px;top:398px;width:152.5px;height:62px;background:#b6c4d0;"></div>
<div class="t" style="left:766.5px;top:421.52px;font-size:16.875px;color:#111;width:152.5px;text-align:center;">Description</div>
<div class="abs" style="left:921px;top:398px;width:39px;height:62px;background:#b6c4d0;"></div>
<div class="t" style="left:922.5px;top:421.52px;font-size:16.875px;color:#111;width:39px;text-align:center;">Env</div>
<div class="abs" style="left:963px;top:398px;width:114.5px;height:62px;background:#b6c4d0;"></div>
<div class="t" style="left:964.5px;top:421.52px;font-size:16.875px;color:#111;width:114.5px;text-align:center;">Quantity</div>
<div class="abs" style="left:1081px;top:398px;width:115px;height:62px;background:#b6c4d0;"></div>
<div class="t" style="left:1082.5px;top:421.52px;font-size:16.875px;color:#111;width:115px;text-align:center;">Rate</div>
<div class="abs" style="left:1199px;top:398px;width:114px;height:62px;background:#b6c4d0;"></div>
<div class="t" style="left:1200.5px;top:421.52px;font-size:16.875px;color:#111;width:114px;text-align:center;">Multiplier</div>
<div class="abs" style="left:1316px;top:398px;width:115px;height:62px;background:#b6c4d0;"></div>
<div class="t" style="left:1317.5px;top:421.52px;font-size:16.875px;color:#111;width:115px;text-align:center;">Amount</div>
<div class="abs" style="left:1434px;top:398px;width:133.5px;height:62px;background:#b6c4d0;"></div>
<div class="t" style="left:1435.5px;top:421.52px;font-size:16.875px;color:#111;width:133.5px;text-align:center;">Source</div>
<div class="abs" style="left:1570.5px;top:398px;width:133.5px;height:62px;background:#b6c4d0;"></div>
<div class="t" style="left:1572.0px;top:421.52px;font-size:16.875px;color:#111;width:133.5px;text-align:center;">Action</div>
<div class="abs" style="left:587px;top:466px;width:114px;height:35px;background:#f1f0eb;"></div>
<div class="t" style="left:599.5px;top:473.63px;font-size:18.75px;color:#1a1a1a;">17/01/2025</div>
<div class="abs" style="left:704px;top:466px;width:57.5px;height:35px;background:#f1f0eb;"></div>
<div class="t" style="left:711px;top:473.63px;font-size:18.75px;color:#1a1a1a;">002</div>
<div class="abs" style="left:765px;top:466px;width:151.5px;height:35px;background:#f1f0eb;"></div>
<div class="t" style="left:772px;top:473.63px;font-size:18.75px;color:#1a1a1a;">CASUAL PAY</div>
<div class="abs" style="left:919.5px;top:466px;width:37.5px;height:35px;background:#f1f0eb;"></div>
<div class="t" style="left:919.5px;top:473.63px;font-size:18.75px;color:#1a1a1a;width:37.5px;text-align:center;">1</div>
<div class="abs" style="left:961px;top:466px;width:114.5px;height:35px;background:#f1f0eb;"></div>
<div class="t" style="left:961px;top:473.63px;font-size:18.75px;color:#1a1a1a;width:112.5px;text-align:right;">16.000000</div>
<div class="abs" style="left:1079px;top:466px;width:113.5px;height:35px;background:#f1f0eb;"></div>
<div class="t" style="left:1079px;top:473.63px;font-size:18.75px;color:#1a1a1a;width:111.5px;text-align:right;">27.362149</div>
<div class="abs" style="left:1196px;top:466px;width:114.5px;height:35px;background:#f1f0eb;"></div>
<div class="t" style="left:1196px;top:473.63px;font-size:18.75px;color:#1a1a1a;width:112.5px;text-align:right;">1.000000</div>
<div class="abs" style="left:1314px;top:466px;width:114px;height:35px;background:#f1f0eb;"></div>
<div class="t" style="left:1314px;top:473.63px;font-size:18.75px;color:#1a1a1a;width:112px;text-align:right;">$437.79</div>
<div class="abs" style="left:1431px;top:466px;width:134px;height:35px;background:#f1f0eb;"></div>
<div class="t" style="left:1438px;top:473.63px;font-size:18.75px;color:#1a1a1a;">MANUAL</div>
<div class="abs" style="left:1568px;top:466px;width:133px;height:35px;background:#f1f0eb;"></div>
<div class="abs" style="left:587px;top:504px;width:114px;height:34px;background:#f1f0eb;"></div>
<div class="t" style="left:599.5px;top:511.63px;font-size:18.75px;color:#1a1a1a;">17/10/2008</div>
<div class="abs" style="left:704px;top:504px;width:57.5px;height:34px;background:#f1f0eb;"></div>
<div class="t" style="left:711px;top:511.63px;font-size:18.75px;color:#1a1a1a;">002</div>
<div class="abs" style="left:765px;top:504px;width:151.5px;height:34px;background:#f1f0eb;"></div>
<div class="t" style="left:772px;top:511.63px;font-size:18.75px;color:#1a1a1a;">CASUAL PAY</div>
<div class="abs" style="left:919.5px;top:504px;width:37.5px;height:34px;background:#f1f0eb;"></div>
<div class="t" style="left:919.5px;top:511.63px;font-size:18.75px;color:#1a1a1a;width:37.5px;text-align:center;">1</div>
<div class="abs" style="left:961px;top:504px;width:114.5px;height:34px;background:#f1f0eb;"></div>
<div class="t" style="left:961px;top:511.63px;font-size:18.75px;color:#1a1a1a;width:112.5px;text-align:right;">1.000000</div>
<div class="abs" style="left:1079px;top:504px;width:113.5px;height:34px;background:#f1f0eb;"></div>
<div class="t" style="left:1079px;top:511.63px;font-size:18.75px;color:#1a1a1a;width:111.5px;text-align:right;">21.000000</div>
<div class="abs" style="left:1196px;top:504px;width:114.5px;height:34px;background:#f1f0eb;"></div>
<div class="t" style="left:1196px;top:511.63px;font-size:18.75px;color:#1a1a1a;width:112.5px;text-align:right;">1.000000</div>
<div class="abs" style="left:1314px;top:504px;width:114px;height:34px;background:#f1f0eb;"></div>
<div class="t" style="left:1314px;top:511.63px;font-size:18.75px;color:#1a1a1a;width:112px;text-align:right;">$21.00</div>
<div class="abs" style="left:1431px;top:504px;width:134px;height:34px;background:#f1f0eb;"></div>
<div class="t" style="left:1438px;top:511.63px;font-size:18.75px;color:#1a1a1a;">MANUAL</div>
<div class="abs" style="left:1568px;top:504px;width:133px;height:34px;background:#f1f0eb;"></div>
<div class="t" style="left:1575.5px;top:476.12px;font-size:16.875px;color:#111;text-decoration:underline;">View</div>
<div class="t" style="left:1618px;top:476.12px;font-size:16.875px;color:#111;text-decoration:underline;">Timesheet</div>
<div class="t" style="left:1618px;top:514.22px;font-size:16.875px;color:#111;text-decoration:underline;">View</div>
<div class="abs" style="left:587px;top:665px;width:1117px;height:42px;background:#b6c4d0;"></div>
<div class="abs" style="left:1622.5px;top:668.5px;width:77px;height:35px;background:linear-gradient(#fafafa,#e6e6e6);border:1px solid #bdbdbd;border-radius:4px"></div>
<div class="t" style="left:1622.5px;top:676.63px;font-size:18.75px;color:#222;width:77px;text-align:center;">Close</div>
<svg class="abs" style="left:1598px;top:457px;filter:drop-shadow(1px 2px 1.5px rgba(0,0,0,0.35))" width="120" height="52" viewBox="0 0 120 52"><ellipse cx="59.3" cy="25" rx="55.4" ry="21.5" fill="none" stroke="#5bb84b" stroke-width="5.4"/></svg>
</body></html>
